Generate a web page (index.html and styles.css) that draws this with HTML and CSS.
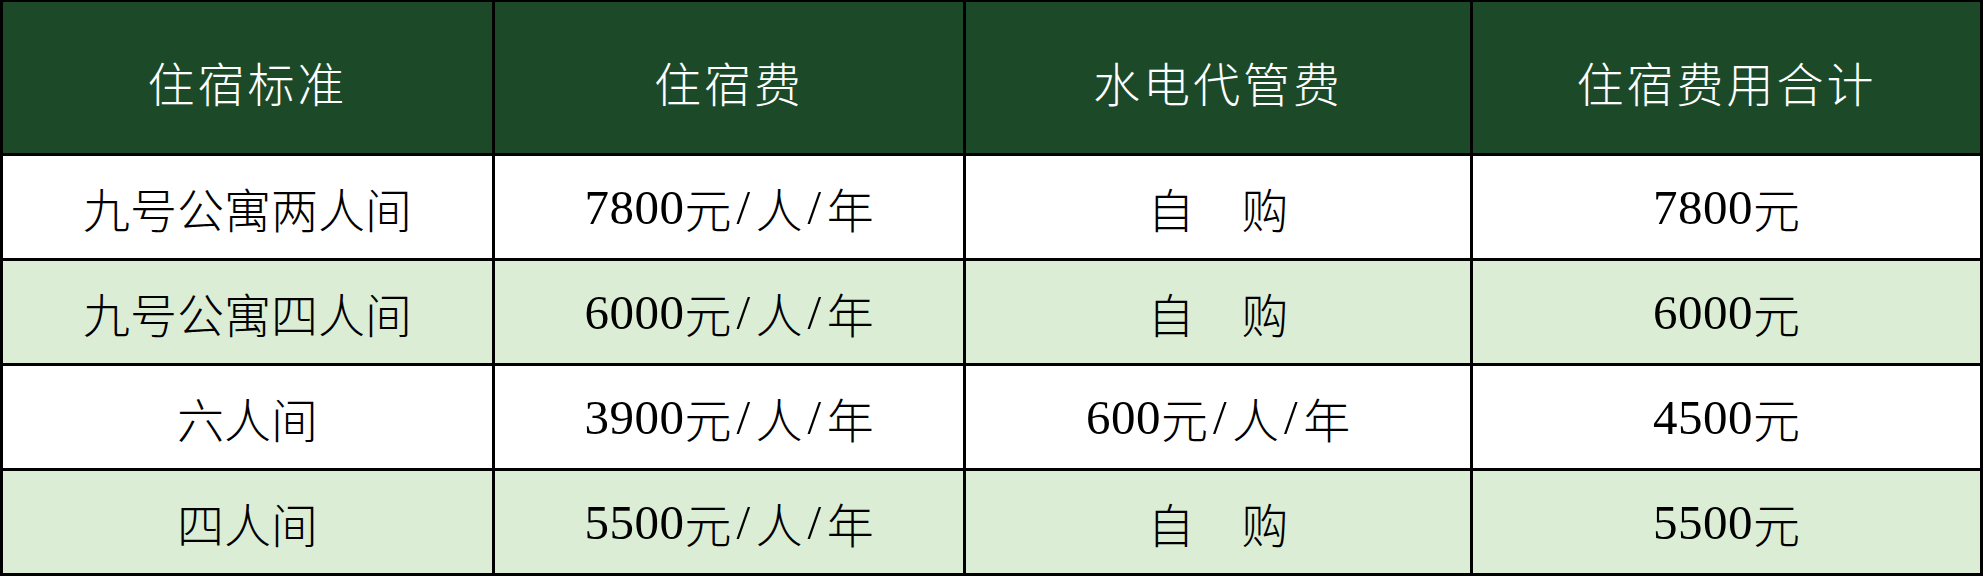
FILE: index.html
```html
<!DOCTYPE html>
<html>
<head>
<meta charset="utf-8">
<title>住宿费用</title>
<link rel="stylesheet" href="styles.css">
</head>
<body>
<div class="sheet">
  <div class="cell head">住宿标准</div>
  <div class="cell head">住宿费</div>
  <div class="cell head">水电代管费</div>
  <div class="cell head">住宿费用合计</div>

  <div class="cell">九号公寓两人间</div>
  <div class="cell"><span class="num">7800</span>元<span class="num sl">/</span>人<span class="num sl">/</span>年</div>
  <div class="cell">自　购</div>
  <div class="cell"><span class="num">7800</span>元</div>

  <div class="cell alt">九号公寓四人间</div>
  <div class="cell alt"><span class="num">6000</span>元<span class="num sl">/</span>人<span class="num sl">/</span>年</div>
  <div class="cell alt">自　购</div>
  <div class="cell alt"><span class="num">6000</span>元</div>

  <div class="cell">六人间</div>
  <div class="cell"><span class="num">3900</span>元<span class="num sl">/</span>人<span class="num sl">/</span>年</div>
  <div class="cell"><span class="num">600</span>元<span class="num sl">/</span>人<span class="num sl">/</span>年</div>
  <div class="cell"><span class="num">4500</span>元</div>

  <div class="cell alt">四人间</div>
  <div class="cell alt"><span class="num">5500</span>元<span class="num sl">/</span>人<span class="num sl">/</span>年</div>
  <div class="cell alt">自　购</div>
  <div class="cell alt"><span class="num">5500</span>元</div>
</div>
</body>
</html>
```

FILE: styles.css
```css
html, body {
  margin: 0;
  padding: 0;
  background: #ffffff;
}

body {
  width: 1984px;
  height: 576px;
  overflow: hidden;
}

.sheet {
  display: grid;
  grid-template-columns: 489px 468px 504px 507px;
  grid-template-rows: 151px repeat(4, 102px);
  gap: 3px;
  padding: 2px 3px 3px 3px;
  width: max-content;
  background: #000000;
  font-family: "Noto Sans CJK SC", sans-serif;
  font-weight: 300;
  font-size: 47px;
  color: #000000;
}

.cell {
  display: flex;
  align-items: center;
  justify-content: center;
  background: #ffffff;
  line-height: 1;
  white-space: nowrap;
}

.cell.alt {
  background: #dcedd5;
}

.cell.head {
  background: #1c4a29;
  color: #ffffff;
  font-size: 47px;
  letter-spacing: 3px;
  padding-top: 8px;
  box-sizing: border-box;
}

.num {
  font-family: "Liberation Serif", serif;
  font-weight: 400;
  font-size: 49px;
  letter-spacing: 0.5px;
}

.sl {
  padding: 0 5px;
}
```
